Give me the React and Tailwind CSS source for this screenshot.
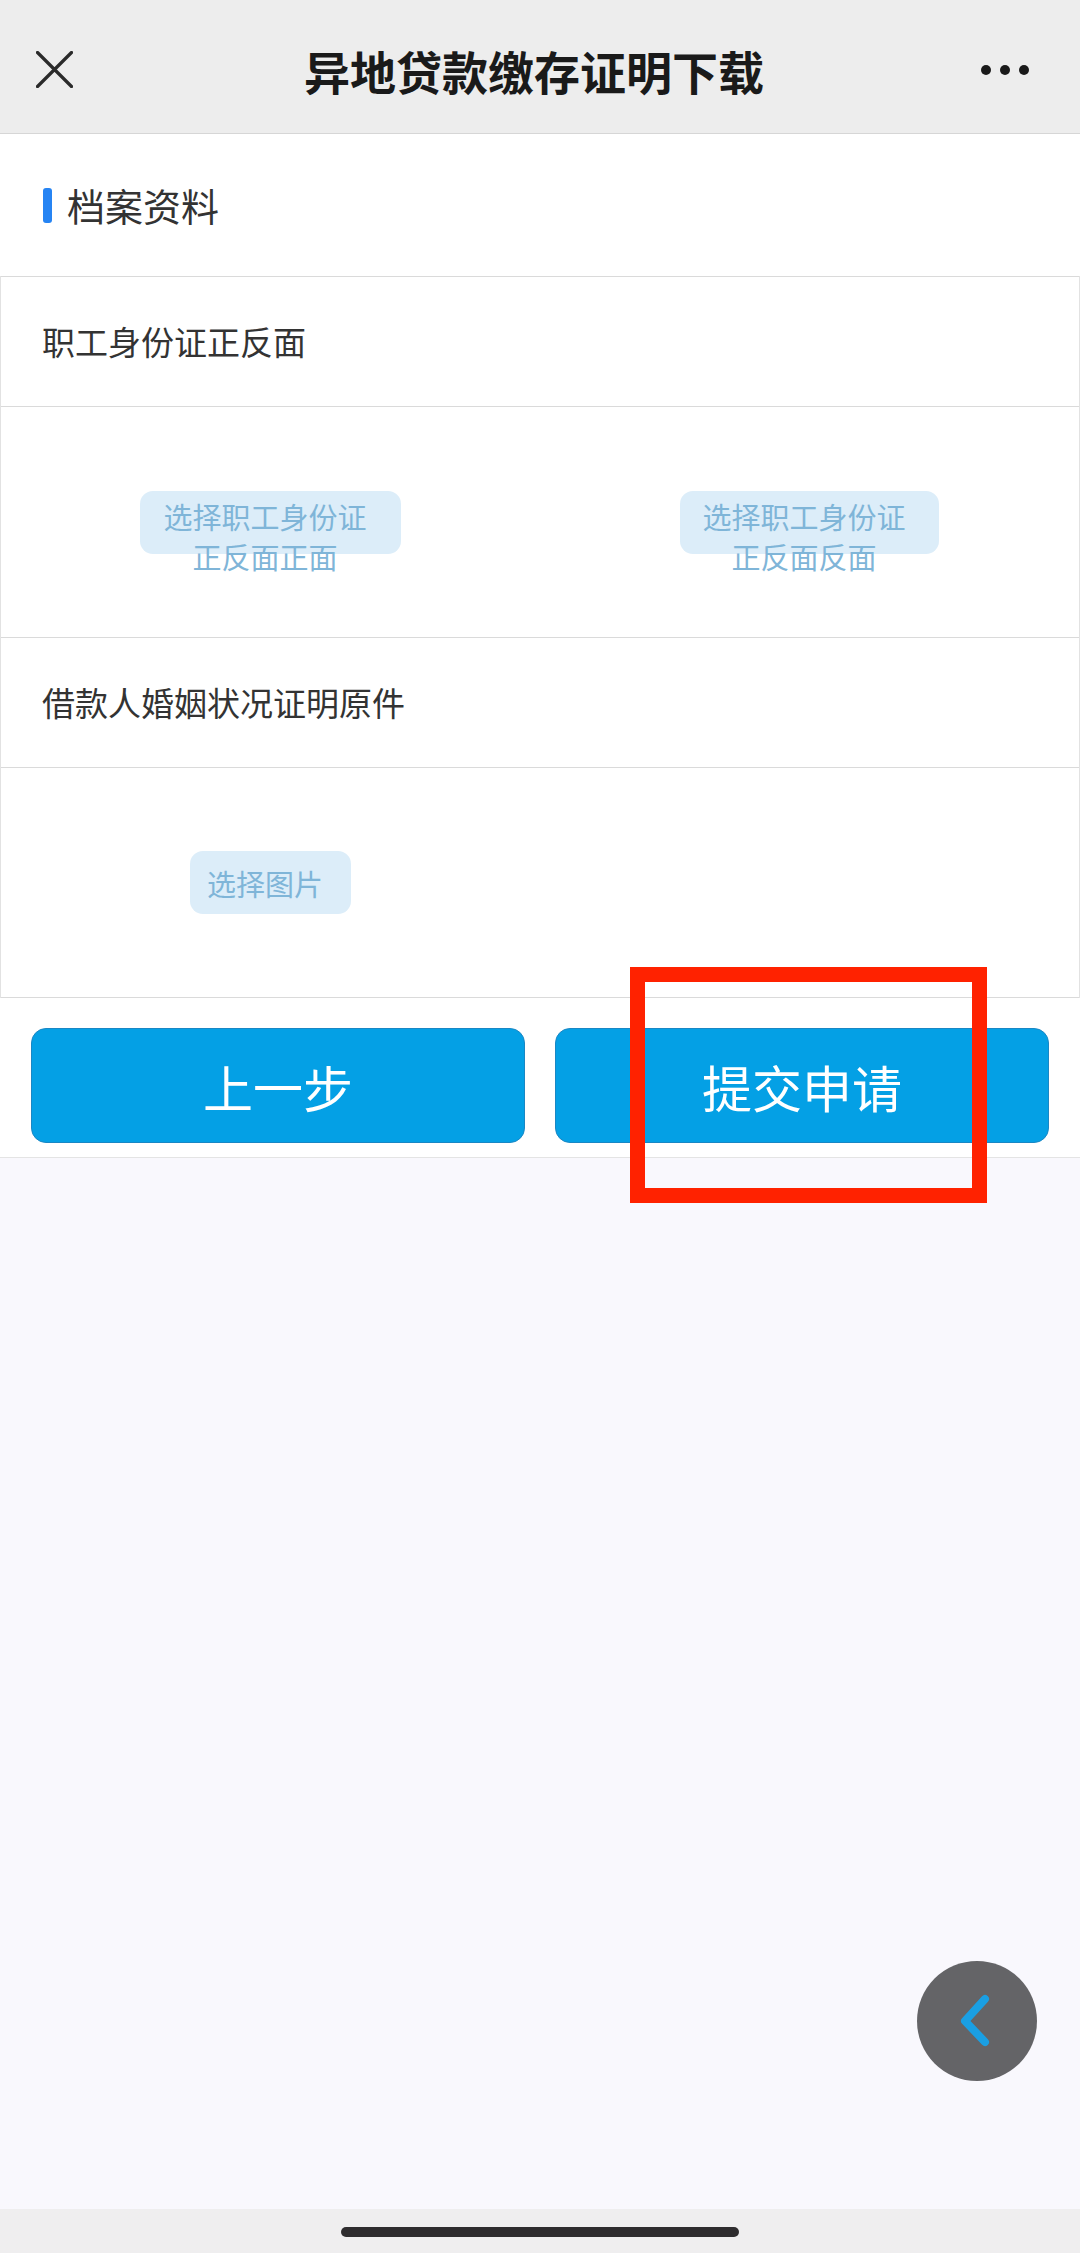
// upload page for remote loan deposit certificate

import React from 'react';

const font = { fontFamily: '"Noto Sans CJK SC", "Noto Sans", sans-serif' };

const PickButton = ({ lines, width }) => {
  return (
    <div
      className={`h-[63px] rounded-[13px] bg-[#dcedf9] text-[#7fb5d8] text-[29px] leading-[40px] text-center pr-[11px] ${width}`}
    >
      {lines.length > 1 ? (
        <div className="pt-[5px]">
          {lines.map((l) => (
            <div key={l}>{l}</div>
          ))}
        </div>
      ) : (
        <div className="h-full flex items-center justify-center">{lines[0]}</div>
      )}
    </div>
  );
};

const App = () => {
  return (
    <div className="relative flex min-h-screen w-full flex-col bg-[#f9f8fd]" style={font}>
      {/* Top bar */}
      <div className="h-[134px] flex items-center bg-[#ededed] border-b border-[#d6d6d6] pt-[6px] px-[36px]">
        <div className="w-[100px] shrink-0">
          <svg width="37" height="37" viewBox="0 0 37 37">
            <path d="M1.5 1.5 L35.5 35.5 M35.5 1.5 L1.5 35.5" stroke="#2a2a2a" strokeWidth="3.2" strokeLinecap="round" />
          </svg>
        </div>
        <h1 className="flex-1 text-center pr-[12px] text-[46px] font-bold text-[#1a1a1a] leading-none">异地贷款缴存证明下载</h1>
        <div className="w-[100px] shrink-0 flex justify-end pr-[15px]">
          <div className="flex items-center gap-[9px]">
            <span className="w-[10px] h-[10px] rounded-full bg-[#1a1a1a]"></span>
            <span className="w-[10px] h-[10px] rounded-full bg-[#1a1a1a]"></span>
            <span className="w-[10px] h-[10px] rounded-full bg-[#1a1a1a]"></span>
          </div>
        </div>
      </div>

      {/* Section heading */}
      <div className="h-[142px] bg-white flex items-center px-[43px]">
        <span className="w-[9px] h-[35px] rounded-[3px] bg-[#2684f3] mr-[15px]"></span>
        <span className="text-[38px] text-[#333333] leading-none">档案资料</span>
      </div>

      {/* Upload rows */}
      <div className="bg-white border-x border-[#e2e2e2]">
        <div className="h-[130px] border-t border-[#dadada] flex items-center px-[41px] text-[33px] text-[#333333]">
          职工身份证正反面
        </div>
        <div className="h-[231px] border-t border-[#dadada] grid grid-cols-2">
          <div className="flex items-center justify-center">
            <PickButton lines={['选择职工身份证', '正反面正面']} width="w-[261px]" />
          </div>
          <div className="flex items-center justify-center">
            <PickButton lines={['选择职工身份证', '正反面反面']} width="w-[259px]" />
          </div>
        </div>
        <div className="h-[130px] border-t border-[#dadada] flex items-center px-[41px] text-[33px] text-[#333333]">
          借款人婚姻状况证明原件
        </div>
        <div className="h-[231px] border-y border-[#dadada] grid grid-cols-2">
          <div className="flex items-center justify-center">
            <PickButton lines={['选择图片']} width="w-[161px]" />
          </div>
          <div></div>
        </div>
      </div>

      {/* Buttons */}
      <div className="bg-white border-b border-[#e4e4e4] flex gap-[30px] px-[31px] pt-[30px] pb-[14px]">
        <button className="flex-1 h-[115px] rounded-[15px] bg-[#04a0e5] border border-[#1a87c4] text-white text-[50px] leading-none">
          上一步
        </button>
        <button className="flex-1 h-[115px] rounded-[15px] bg-[#04a0e5] border border-[#1a87c4] text-white text-[50px] leading-none">
          提交申请
        </button>
      </div>

      {/* Empty area */}
      <div className="flex-1 bg-[#f9f8fd]"></div>

      {/* Home indicator */}
      <div className="h-[44px] bg-[#efeeef] flex justify-center pt-[18px]">
        <div className="w-[398px] h-[10px] rounded-full bg-[#2e2c2e]"></div>
      </div>

      {/* Annotation box */}
      <div className="absolute left-[630px] top-[967px] w-[357px] h-[236px] border-[15px] border-[#ff2200]"></div>

      {/* Floating back button */}
      <div className="absolute right-[43px] bottom-[172px] w-[120px] h-[120px] rounded-full bg-[#646467] flex items-center justify-center">
        <svg width="40" height="60" viewBox="0 0 40 60">
          <path d="M28 8 L8 30 L28 51" fill="none" stroke="#1a9fe3" strokeWidth="8" strokeLinecap="round" strokeLinejoin="round" />
        </svg>
      </div>
    </div>
  );
};

export default App;
